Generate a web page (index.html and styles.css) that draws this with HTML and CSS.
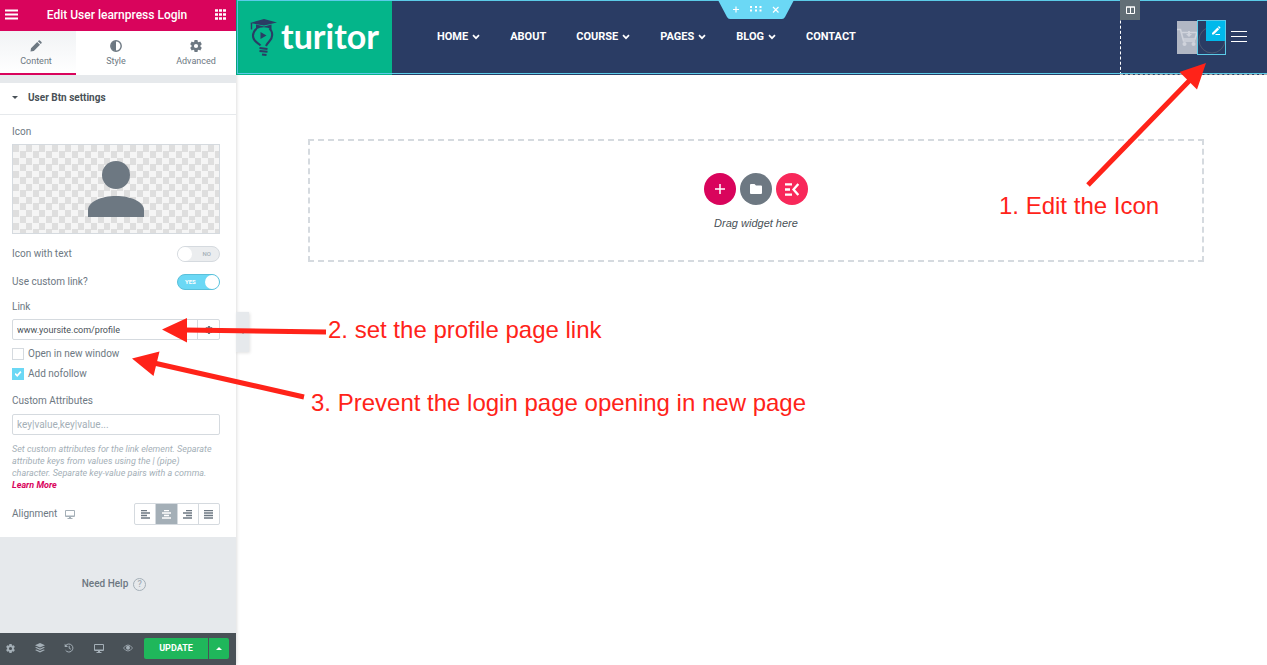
FILE: index.html
```html
<!DOCTYPE html>
<html lang="en">
<head>
<meta charset="utf-8">
<meta name="viewport" content="width=device-width, initial-scale=1">
<title>Edit User learnpress Login</title>
<link rel="stylesheet" href="styles.css">
</head>
<body>
<svg class="sprite" aria-hidden="true">
  <symbol id="gear" viewBox="0 0 20 20"><path fill-rule="evenodd" d="M7.500 0h5l.5 2.800 1.500.9 2.700-1 2.500 4.200-2.200 1.800v2.600l2.200 1.800-2.500 4.200-2.700-1-1.500.9-.5 2.800h-5L7 17.200l-1.500-.9-2.700 1-2.500-4.200 2.200-1.800V8.700L.300 6.900l2.500-4.200 2.700 1L7 2.800zM10 6.500a3.500 3.500 0 1 0 0 7 3.500 3.500 0 0 0 0-7z"/></symbol>
  <symbol id="chevron" viewBox="0 0 8 6"><path d="M1 1.200 4 4.200 7 1.200" fill="none" stroke="currentColor" stroke-width="1.700"/></symbol>
  <symbol id="monitor" viewBox="0 0 20 18"><path fill-rule="evenodd" d="M2 0h16a2 2 0 0 1 2 2v10a2 2 0 0 1-2 2h-6v2h3v2H5v-2h3v-2H2a2 2 0 0 1-2-2V2a2 2 0 0 1 2-2zm0 2v9h16V2z"/></symbol>
</svg>

<aside class="panel">
  <header class="panel-header">
    <button class="icon-btn" aria-label="Menu"><svg width="14" height="12" viewBox="0 0 14 12"><path d="M0 1.500h13M0 5.500h13M0 9.500h13" stroke="currentColor" stroke-width="1.800"/></svg></button>
    <h1>Edit User learnpress Login</h1>
    <button class="icon-btn" aria-label="Widgets"><svg width="11" height="11" viewBox="0 0 11 11"><path d="M0 1.500h3M4 1.500h3M8 1.500h3M0 5.500h3M4 5.500h3M8 5.500h3M0 9.500h3M4 9.500h3M8 9.500h3" stroke="currentColor" stroke-width="2.600"/></svg></button>
  </header>
  <nav class="tabs">
    <button class="tab active"><svg width="12" height="12" viewBox="0 0 12 12"><path d="M1 8.200 7.200 2l2.800 2.800L3.800 11 .500 11.500zM7.900 1.300l.8-.8q.6-.5 1.200 0l1.600 1.600q.5.600 0 1.200l-.8.800z"/></svg>Content</button>
    <button class="tab"><svg width="12" height="12" viewBox="0 0 12 12"><circle cx="6" cy="6" r="5.200" fill="none" stroke="currentColor" stroke-width="1.400"/><path d="M6 1a5 5 0 0 0 0 10z"/></svg>Style</button>
    <button class="tab"><svg width="12" height="12"><use href="#gear"/></svg>Advanced</button>
  </nav>

  <section class="section">
    <button class="section-title"><span class="caret"></span>User Btn settings</button>
    <div class="controls">
      <span class="label">Icon</span>
      <button class="media" aria-label="Choose icon"><svg width="56" height="56" viewBox="0 0 56 56"><circle cx="28" cy="14" r="14"/><path d="M0 56v-7c0-8 13-14 28-14s28 6 28 14v7z"/></svg></button>
      <label class="row">Icon with text<span class="switch"><input type="checkbox"><span class="state">NO</span></span></label>
      <label class="row">Use custom link?<span class="switch on"><input type="checkbox" checked><span class="state">YES</span></span></label>
      <label class="label link-label" for="link">Link</label>
      <div class="link-field">
        <input id="link" type="text" value="www.yoursite.com/profile">
        <button aria-label="Link options"><svg width="8" height="8"><use href="#gear"/></svg></button>
      </div>
      <label class="check"><input type="checkbox">Open in new window</label>
      <label class="check"><input type="checkbox" checked>Add nofollow</label>
      <label class="label attr-label" for="attrs">Custom Attributes</label>
      <input id="attrs" class="text-field" type="text" placeholder="key|value,key|value...">
      <p class="hint">Set custom attributes for the link element. Separate attribute keys from values using the | (pipe) character. Separate key-value pairs with a comma. <a href="#">Learn More</a></p>
      <div class="row align-row">
        <span class="align-label">Alignment <svg width="10" height="9"><use href="#monitor"/></svg></span>
        <div class="align-group">
          <button aria-label="Left"><svg width="9" height="9" viewBox="0 0 9 9"><path d="M0 .500h6M0 3h9M0 5.500h6M0 8h9" stroke="currentColor" stroke-width="1.300"/></svg></button>
          <button class="selected" aria-label="Center"><svg width="9" height="9" viewBox="0 0 9 9"><path d="M2 .500h5M0 3h9M2 5.500h5M0 8h9" stroke="currentColor" stroke-width="1.300"/></svg></button>
          <button aria-label="Right"><svg width="9" height="9" viewBox="0 0 9 9"><path d="M3 .500h6M0 3h9M3 5.500h6M0 8h9" stroke="currentColor" stroke-width="1.300"/></svg></button>
          <button aria-label="Justified"><svg width="9" height="9" viewBox="0 0 9 9"><path d="M0 .500h9M0 3h9M0 5.500h9M0 8h9" stroke="currentColor" stroke-width="1.300"/></svg></button>
        </div>
      </div>
    </div>
  </section>

  <a class="help" href="#">Need Help <span class="help-mark">?</span></a>

  <footer class="panel-footer">
    <div class="tools">
      <button aria-label="Settings"><svg width="9" height="9"><use href="#gear"/></svg></button>
      <button aria-label="Navigator"><svg width="10" height="10" viewBox="0 0 10 10"><path d="M5 0l5 2.300-5 2.300L0 2.300zM0 4.500l1.500-.6L5 5.500l3.500-1.600 1.500.6-5 2.400zM0 7l1.500-.6L5 8l3.500-1.600L10 7 5 9.500z"/></svg></button>
      <button aria-label="History"><svg width="10" height="10" viewBox="0 0 10 10"><path d="M1.800 2.500a4 4 0 1 1-.2 4.800M5.200 2.800v2.400l1.700 1" fill="none" stroke="currentColor"/><path d="M.700.800v3.300H4z"/></svg></button>
      <button aria-label="Responsive mode"><svg width="10" height="9"><use href="#monitor"/></svg></button>
      <button aria-label="Preview"><svg width="10" height="8" viewBox="0 0 10 8"><path d="M.500 4Q2.500 1 5 1t4.500 3Q7.500 7 5 7T.500 4z" fill="none" stroke="currentColor" stroke-width=".8"/><circle cx="5" cy="3.800" r="2"/></svg></button>
    </div>
    <button class="update">UPDATE</button>
    <button class="update-more" aria-label="Save options"><span></span></button>
  </footer>
  <button class="collapse" aria-label="Hide panel">‹</button>
</aside>

<main class="preview">
  <header class="site-header">
    <a class="logo" href="#">
      <svg width="28" height="38" viewBox="0 0 28 38"><path d="M0 4 14 0l13 3.500L14 6.500z"/><path d="M6 5.500v5q8-4.500 15.500 0v-5L14 7.500z"/><path d="M1.500 4v6.500" stroke="currentColor" stroke-width="1.400"/><path d="M10.500 26.500C9 24 3 23 3 16.800a9.500 9.500 0 0 1 3.500-7M19.500 9.500c2 1.700 2.700 4 2.700 6.500 0 5.500-4.200 6.500-6.200 11M9.500 29l8 1M9.500 32l8 .8M12 35.500l4.500.5" fill="none" stroke="currentColor" stroke-width="2.100"/><path d="M10.500 13v7l6-3.500z"/></svg>
      <span>turitor</span>
    </a>
    <nav class="menu">
      <a href="#">HOME<svg width="8" height="6"><use href="#chevron"/></svg></a>
      <a href="#">ABOUT</a>
      <a href="#">COURSE<svg width="8" height="6"><use href="#chevron"/></svg></a>
      <a href="#">PAGES<svg width="8" height="6"><use href="#chevron"/></svg></a>
      <a href="#">BLOG<svg width="8" height="6"><use href="#chevron"/></svg></a>
      <a href="#">CONTACT</a>
    </nav>
    <div class="column">
      <span class="column-handle"><svg width="9" height="8" viewBox="0 0 9 8"><path d="M.500 1h8v6.500h-8zM4.500 1v6.500M0 1h9" fill="none" stroke="currentColor"/></svg></span>
      <div class="column-items">
        <a class="cart" href="#" aria-label="Cart"><svg width="20" height="20" viewBox="0 0 20 20"><path d="M0 1.500h3.500L6.500 13H18M5 4.500h15l-2 6.500H6.500" fill="none" stroke="currentColor" stroke-width="1.600"/><path d="M11 3h2v3h2l-3 3-3-3h2z"/><circle cx="7.500" cy="16" r="2"/><circle cx="16.500" cy="16" r="2"/></svg></a>
        <div class="user-widget">
          <svg class="ring" width="27" height="33" viewBox="0 0 27 33"><circle cx="14" cy="19" r="13" fill="none" stroke="#4c5870"/></svg>
          <button class="edit-badge" aria-label="Edit widget"><svg width="10" height="10" viewBox="0 0 10 10"><path d="M1 7 6.500 1.500l1.700 1.700L2.700 8.500H1zM7 1l.9-.9 1.700 1.700-.9.900zM5 8h4v1H4z"/></svg></button>
        </div>
        <button class="burger" aria-label="Open menu"><span></span><span></span><span></span></button>
      </div>
    </div>
    <div class="section-handle">
      <svg width="76" height="19" viewBox="0 0 76 19"><path d="M0 0h76L67 17q-1 2-3 2H12q-2 0-3-2z" fill="#6bd8f5"/><path d="M15 9.500h6M18 6.500v6M55 7l5.500 5.500M60.500 7 55 12.500" stroke="#fff" stroke-width="1.200"/><path d="M32 7h2M37 7h2M41.500 7h2M32 10.500h2M37 10.500h2M41.500 10.500h2" stroke="#fff" stroke-width="2"/></svg>
    </div>
  </header>

  <section class="drop-area">
    <div class="drop-zone">
      <div class="add-buttons">
        <button class="add" aria-label="Add section"><svg width="10" height="10" viewBox="0 0 10 10"><path d="M0 5h10M5 0v10" stroke="currentColor" stroke-width="1.500"/></svg></button>
        <button class="template" aria-label="Add template"><svg width="12" height="10" viewBox="0 0 12 10"><path d="M1 0h3.500L6 1.500h5a1 1 0 0 1 1 1V9a1 1 0 0 1-1 1H1a1 1 0 0 1-1-1V1a1 1 0 0 1 1-1z"/></svg></button>
        <button class="kit" aria-label="Add from kit"><svg width="14" height="13" viewBox="0 0 14 13"><path d="M0 1.300h7M0 6.500h5M0 11.700h7M13.300 1 8.500 6.500l4.800 5.500" fill="none" stroke="currentColor" stroke-width="2.300"/></svg></button>
      </div>
      <p>Drag widget here</p>
    </div>
  </section>
</main>

<div class="annotations">
  <svg width="1267" height="665" viewBox="0 0 1267 665">
    <g stroke="#ff2319" stroke-width="5"><path d="M1088 185 1191 79M326 332 185 330M304 397 154 363"/></g>
    <path fill="#ff2319" d="M1206 63 1197 89.500 1179.500 72zM162 329.500 187 318v24.500zM132 358.500l27.500-7-6 24.500z"/>
  </svg>
  <p class="note note-icon">1. Edit the Icon</p>
  <p class="note note-link">2. set the profile page link</p>
  <p class="note note-window">3. Prevent the login page opening in new page</p>
</div>
</body>
</html>
```

FILE: styles.css
```css
* { box-sizing: border-box; }
body {
  margin: 0;
  min-height: 100vh;
  display: flex;
  position: relative;
  overflow-x: hidden;
  background: #fff;
  font-family: Roboto, "Liberation Sans", sans-serif;
  font-size: 10px;
  line-height: 12px;
  color: #6d7882;
}
button, input { font: inherit; color: inherit; }
button { margin: 0; padding: 0; border: 0; background: none; display: flex; align-items: center; justify-content: center; }
a { color: inherit; text-decoration: none; }
p, h1 { margin: 0; }
svg { display: block; flex: none; fill: currentColor; }
.sprite { position: absolute; width: 0; height: 0; }

/* Editor panel */
.panel {
  position: relative;
  z-index: 1;
  flex: none;
  width: 240px;
  margin-left: -4px;
  display: flex;
  flex-direction: column;
  background: #e6e9ec;
  box-shadow: 0 0 4px rgba(0, 0, 0, .2);
}
.panel-header {
  height: 31px;
  padding: 0 10px 2px 9px;
  display: flex;
  align-items: center;
  justify-content: space-between;
  background: #d9045c;
  color: #fff;
}
.panel-header h1 { font-size: 12px; font-weight: 500; line-height: 16px; }
.tabs { height: 44px; display: grid; grid-template-columns: repeat(3, 1fr); background: #fff; }
.tab { flex-direction: column; gap: 3px; padding-top: 3px; border-bottom: 2px solid transparent; font-size: 9px; }
.tab.active { border-color: #d9045c; background: linear-gradient(#f1f3f5, #fff); }
.section { margin-top: 8px; background: #fff; }
.section-title {
  width: 100%;
  height: 32px;
  padding: 0 16px 2px;
  justify-content: flex-start;
  gap: 10px;
  border-bottom: 1px solid #e6e9ec;
  color: #495157;
  font-weight: 700;
}
.caret { border: 3px solid transparent; border-top: 3px solid #495157; border-bottom: 0; }
.controls { padding: 11px 16px 12px; display: flex; flex-direction: column; }
.media {
  height: 90px;
  margin: 6px 0 12px;
  border: 1px solid #d5dadf;
  background: #f5f5f5 repeating-conic-gradient(#f5f5f5 0 25%, #dedede 0 50%) 0 0 / 13px 13px;
}
.row { display: flex; align-items: center; justify-content: space-between; }
.row + .row { margin-top: 12px; }
.switch { position: relative; display: flex; align-items: center; }
.switch input {
  appearance: none;
  width: 43px;
  height: 16px;
  margin: 0;
  display: flex;
  border: 1px solid #d5dadf;
  border-radius: 8px;
  background: #ebedef;
}
.switch input::before { content: ""; width: 14px; height: 14px; border-radius: 50%; background: #fff; }
.switch input:checked { justify-content: flex-end; border-color: #5ac0da; background: #6bd8f5; }
.state { position: absolute; right: 9px; font-size: 6px; font-weight: 500; color: #a4afb7; }
.on .state { right: auto; left: 8px; color: #fff; font-weight: 700; }
.link-label { margin: 11px 0 6px; }
.link-field { display: flex; height: 21px; margin-bottom: 8px; border: 1px solid #d5dadf; border-radius: 2px; background: #fff; }
.link-field input { flex: 1; min-width: 0; padding: 0 4px; border: 0; background: none; color: #495157; font-size: 9px; }
.link-field button { width: 22px; border-left: 1px solid #d5dadf; }
.check { display: flex; align-items: center; gap: 4px; }
.check + .check { margin-top: 8px; }
.check input { appearance: none; width: 12px; height: 12px; margin: 0; border: 1px solid #d5dadf; background: #fff; }
.check input:checked { border-color: #6bd8f5; background: #6bd8f5; display: grid; place-items: center; }
.check input:checked::before { content: ""; width: 7px; height: 6px; background: #fff; clip-path: polygon(0 55%, 18% 35%, 38% 58%, 82% 0, 100% 20%, 40% 100%); }
.attr-label { margin: 15px 0 7px; }
.text-field { height: 21px; padding: 0 4px; border: 1px solid #d5dadf; border-radius: 2px; background: #fff; }
.text-field::placeholder { color: #a4afb7; }
.hint { margin: 8px 0 12px; font-size: 9px; font-style: italic; color: #a4afb7; }
.hint a { color: #d9045c; font-weight: 700; }
.align-label { display: flex; align-items: center; gap: 8px; }
.align-label svg { color: #a4afb7; }
.align-group { display: flex; width: 86px; height: 22px; border: 1px solid #d5dadf; border-radius: 2px; }
.align-group button { flex: 1; }
.align-group button + button { border-left: 1px solid #d5dadf; }
.align-group .selected { background: #a4afb7; color: #fff; }
.help { flex: 1; display: flex; align-items: center; justify-content: center; gap: 5px; padding: 0 4px 2px 0; font-weight: 500; }
.help-mark { width: 13px; height: 13px; border: 1px solid #a4afb7; border-radius: 50%; color: #a4afb7; font-size: 9px; line-height: 11px; text-align: center; }
.panel-footer { height: 32px; padding: 0 7px 2px 0; display: flex; align-items: center; gap: 1px; background: #495157; }
.tools { flex: 1; display: grid; grid-template-columns: repeat(5, 1fr); color: #a4afb7; }
.update, .update-more { height: 21px; background: #1fb75b; color: #fff; font-weight: 700; font-size: 9px; }
.update { width: 64px; border-radius: 2px 0 0 2px; }
.update-more { width: 20px; border-radius: 0 2px 2px 0; }
.update-more span { border: 3px solid transparent; border-bottom: 3px solid #fff; border-top: 0; }
.collapse {
  position: absolute;
  left: 100%;
  top: 312px;
  width: 13px;
  height: 40px;
  background: #e6e9ec;
  box-shadow: 1px 1px 3px rgba(0, 0, 0, .12);
}

/* Site preview */
.preview { flex: 1; min-width: 0; }
.site-header { position: relative; height: 75px; display: flex; background: #2a3c64; }
.site-header::after { content: ""; position: absolute; inset: 0 0 1px 1px; border: 1px solid #5bcbe8; border-right: 0; pointer-events: none; }
.logo { width: 156px; padding-left: 14px; display: flex; align-items: center; gap: 3px; background: #04b58a; color: #2a3c64; }
.logo span { padding-bottom: 4px; color: #fff; font: 700 34px/40px Lato, sans-serif; }
.menu { flex: 1; padding: 0 0 2px 45px; display: flex; align-items: center; gap: 30px; color: #fff; font-size: 11px; font-weight: 700; }
.menu a { display: flex; align-items: center; gap: 4px; }
.column { position: relative; width: 147px; border-left: 1px dashed #fff; border-bottom: 1px dashed #aaa; }
.column-handle { position: absolute; left: -1px; top: 0; z-index: 1; width: 20px; height: 20px; display: grid; place-items: center; background: #626e76; color: #fff; }
.column-items { padding: 20px 20px 0 0; display: flex; justify-content: flex-end; align-items: center; }
.cart { width: 20px; height: 33px; display: grid; place-items: center; background: #b1b7c4; color: #d0d3dc; overflow: hidden; }
.user-widget { position: relative; width: 29px; height: 35px; margin-right: 5px; border: 1px solid #5bcbe8; overflow: hidden; }
.edit-badge { position: absolute; top: -1px; right: -1px; width: 20px; height: 21px; background: #00b9eb; color: #fff; }
.burger { width: 16px; padding-bottom: 3px; flex-direction: column; gap: 4px; }
.burger span { width: 16px; height: 1px; background: #fff; }
.section-handle { position: absolute; top: 0; left: 50%; margin-left: -34px; z-index: 1; }
.drop-area { padding: 64px 63px 0 72px; }
.drop-zone { height: 123px; padding-top: 2px; display: flex; flex-direction: column; align-items: center; justify-content: center; gap: 12px; border: 2px dashed #d5dadf; }
.drop-zone p { color: #495157; font: italic 11px/13px "Liberation Sans", Arial, sans-serif; }
.add-buttons { display: flex; gap: 4px; }
.add-buttons button { width: 32px; height: 32px; border-radius: 50%; color: #fff; }
.add { background: #d9045c; }
.template { background: #6d7882; }
.kit { background: #f8285a; }

/* Tutorial annotations drawn over the screen */
.annotations { position: absolute; inset: 0; z-index: 2; pointer-events: none; overflow: hidden; }
.note { position: absolute; color: #ff2319; font: 24px/28px "Liberation Sans", Arial, sans-serif; white-space: nowrap; }
.note-icon { left: 999px; top: 192px; }
.note-link { left: 328px; top: 316px; }
.note-window { left: 311px; top: 389px; }
```
